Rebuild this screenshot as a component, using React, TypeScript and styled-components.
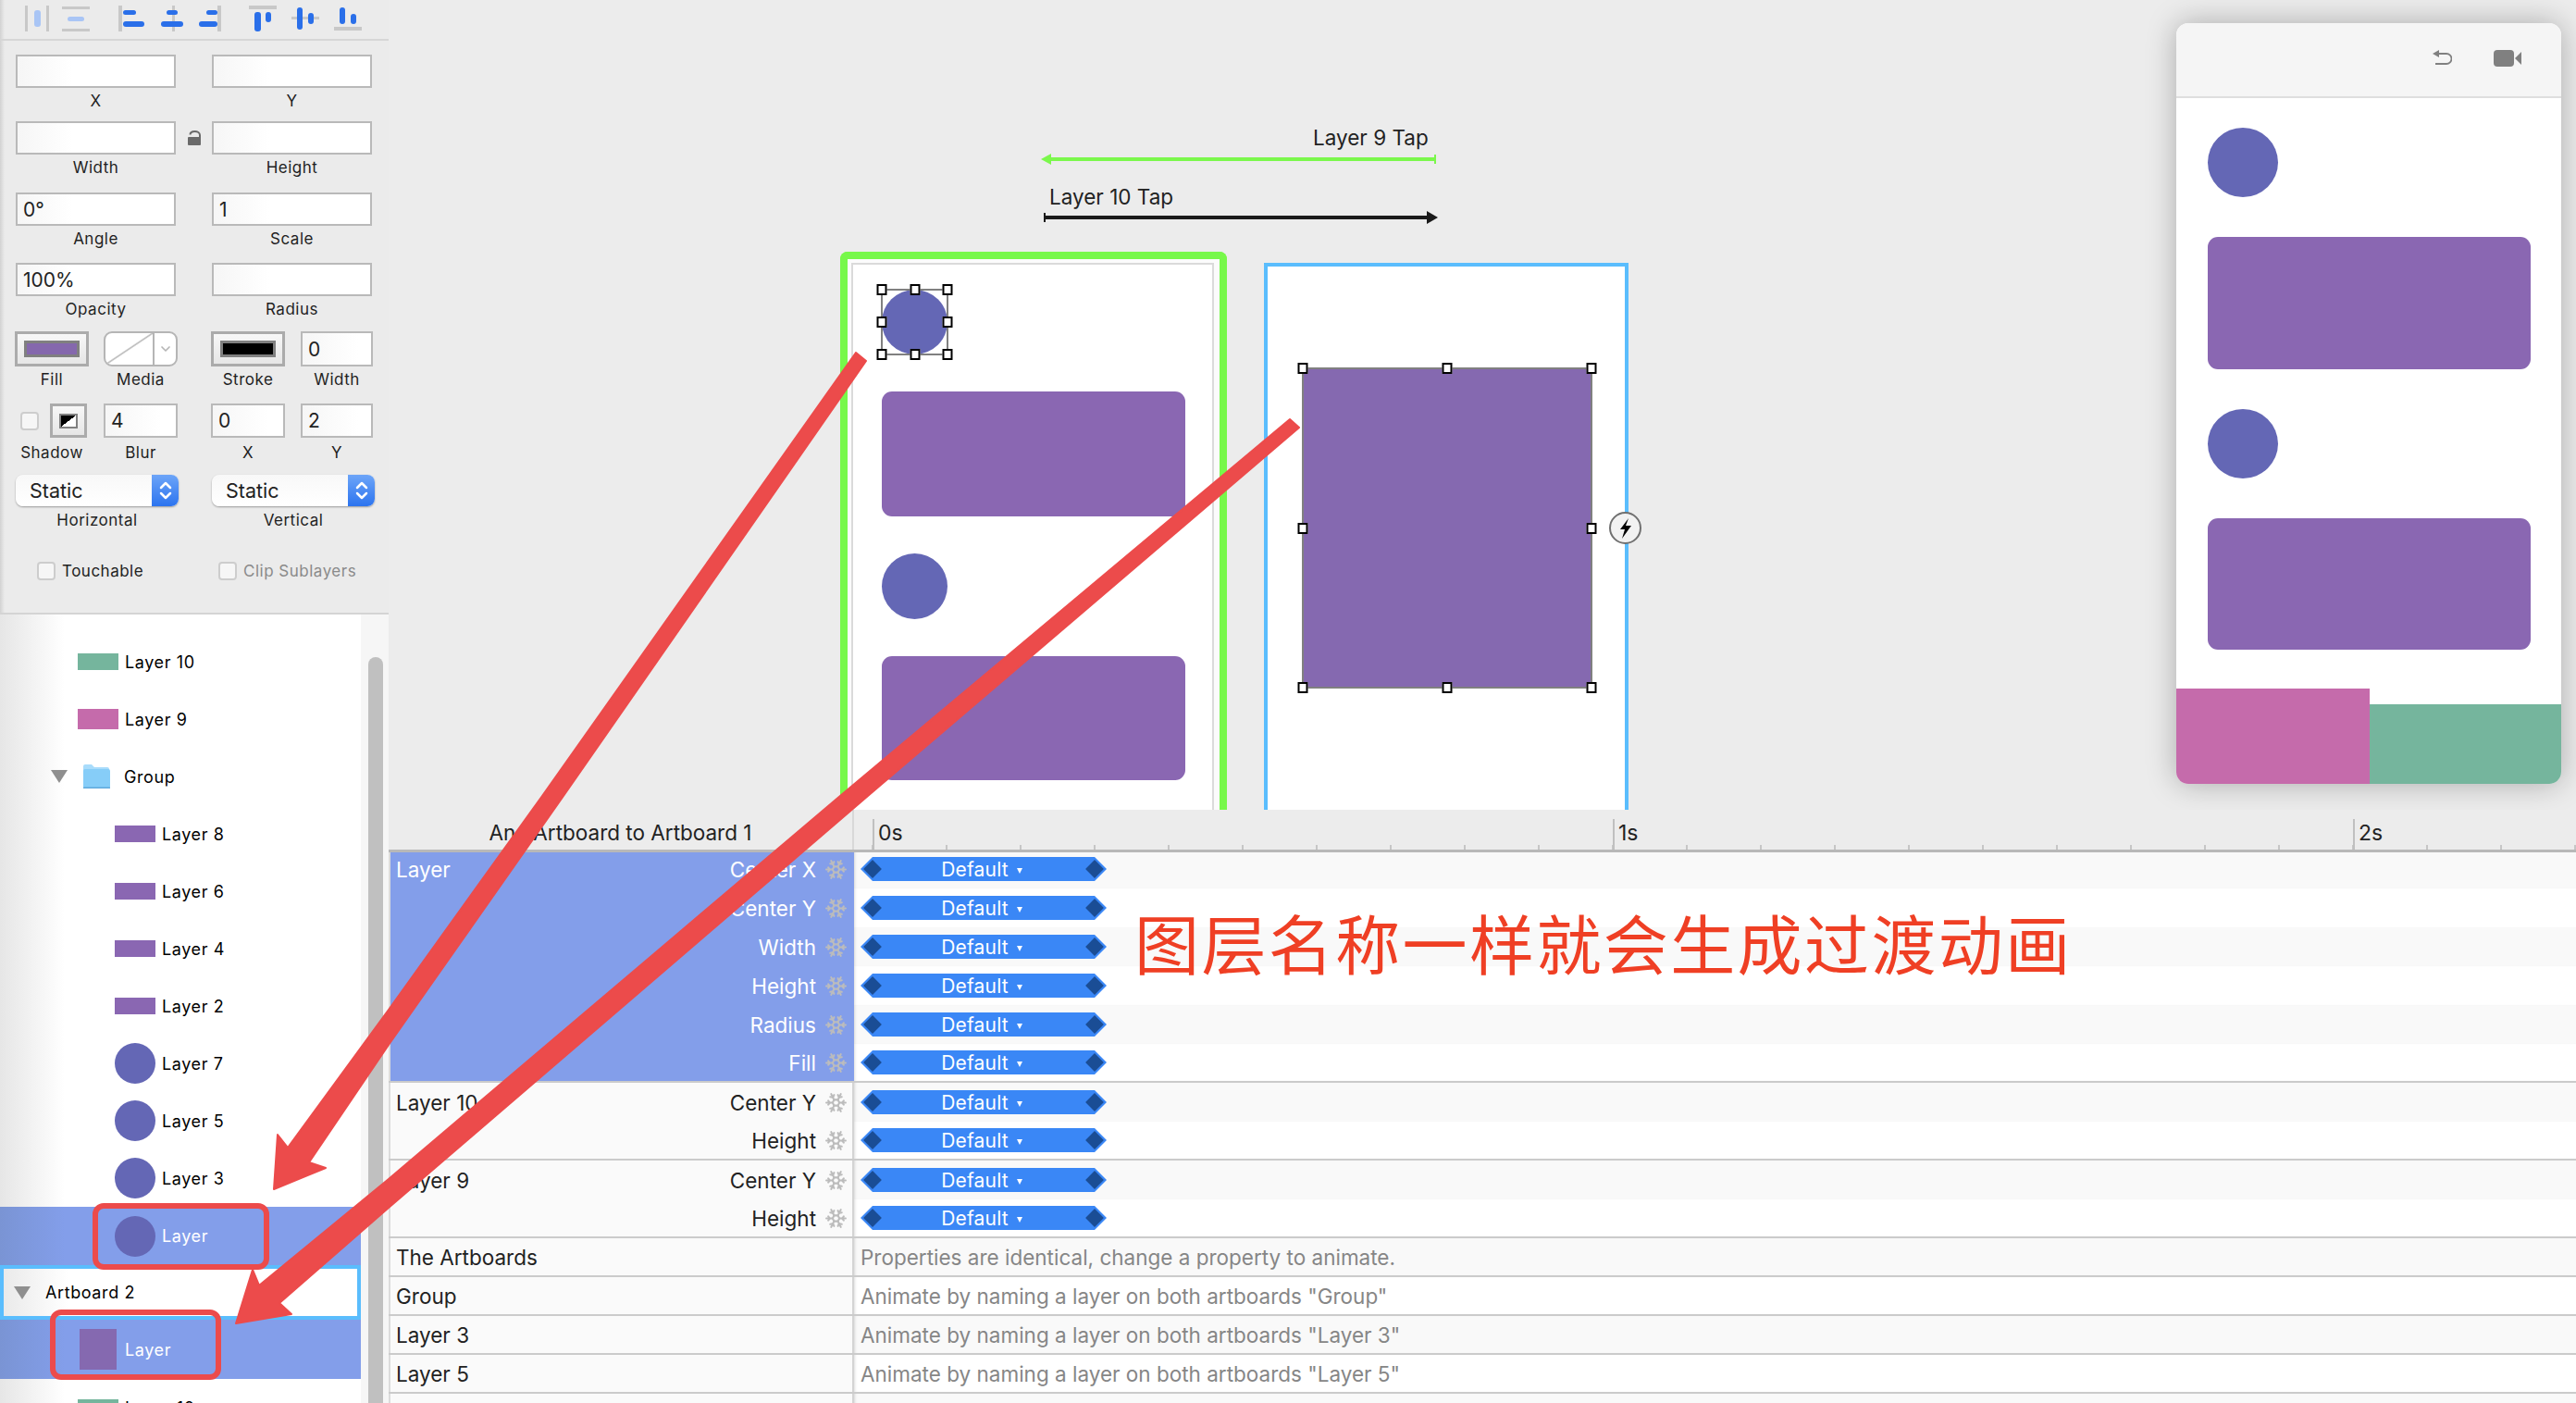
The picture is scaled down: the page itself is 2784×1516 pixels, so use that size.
import React from "react";
import styled, { createGlobalStyle } from "styled-components";
import { ChevronDown, ChevronsUpDown, Snowflake } from "lucide-react";

const PURPLE = "#8a67b2";
const INDIGO = "#6467b5";
const SELECTED = "#839eea";
const RED = "#ec4b4b";

const GlobalStyle = createGlobalStyle`
  html, body { margin: 0; padding: 0; background: #ececec; }
  * { box-sizing: border-box; }
  body { font-family: Inter, "Liberation Sans", sans-serif; }
`;

const Page = styled.div`
  position: relative;
  width: 2784px;
  height: 1516px;
  display: grid;
  grid-template-columns: 420px 1fr;
  overflow: hidden;
`;

/* SIDEBAR */
const Sidebar = styled.aside`
  display: flex;
  flex-direction: column;
  height: 1516px;
  min-width: 0;
`;

const Inspector = styled.section`
  height: 664px;
  flex: none;
  background: linear-gradient(90deg, #d2d2d2 0, #ebebeb 5px);
  border-bottom: 2px solid #d4d4d4;
`;

const Toolbar = styled.div`
  height: 44px;
  display: flex;
  align-items: center;
  padding-bottom: 2px;
  border-bottom: 2px solid #d6d6d6;
  margin-bottom: 15px;
`;

const ToolIcon = styled.svg<{ $ml: number }>`
  flex: none;
  margin-left: ${(p) => p.$ml}px;
`;

const Row = styled.div<{ $mt?: number }>`
  display: grid;
  grid-template-columns: 173px 173px;
  column-gap: 39px;
  padding-left: 17px;
  margin-top: ${(p) => p.$mt ?? 0}px;
`;

const LockRow = styled(Row)`
  grid-template-columns: 173px 39px 173px;
  column-gap: 0;
`;

const WideRow = styled(Row)`
  grid-template-columns: 176px 176px;
  column-gap: 36px;
  padding-left: 16px;
`;

const SelectRow = styled(WideRow)`
  padding-left: 17px;
`;

const Split = styled.div<{ $gap?: number; $last?: number }>`
  display: grid;
  grid-template-columns: 80px ${(p) => p.$last ?? 80}px;
  column-gap: ${(p) => p.$gap ?? 16}px;
`;

const Field = styled.div`
  display: flex;
  flex-direction: column;
  min-width: 0;
`;

const ValueBox = styled.div<{ $h?: number }>`
  height: ${(p) => p.$h ?? 36}px;
  background: linear-gradient(90deg, #f6f6f6 0, #fff 60px);
  border: 2px solid #b9b9b9;
  padding-left: 6px;
  display: flex;
  align-items: center;
  font-size: 21px;
  color: #222;
`;

const Label = styled.div<{ $mt?: number }>`
  margin-top: ${(p) => p.$mt ?? 3}px;
  height: 22px;
  line-height: 22px;
  font-size: 17px;
  letter-spacing: 0.5px;
  text-align: center;
  color: #1f1f1f;
`;

const LockCell = styled.div`
  height: 36px;
  display: flex;
  align-items: center;
  justify-content: center;
`;

const SwatchWell = styled.div<{ $h?: number }>`
  height: ${(p) => p.$h ?? 38}px;
  border: 3px solid #ababab;
  background: linear-gradient(#f7f7f7, #e6e6e6);
  display: flex;
  align-items: center;
  justify-content: center;
`;

const SwatchFill = styled.div<{ $color: string }>`
  width: 60px;
  height: 18px;
  border: 3px solid #808080;
  background: ${(p) => p.$color};
`;

const MediaWell = styled.div`
  height: 38px;
  border: 2px solid #b5b5b5;
  border-radius: 9px;
  background: #fff;
  display: flex;
  overflow: hidden;
`;

const MediaPreview = styled.div`
  flex: 1;
  border-right: 2px solid #b5b5b5;
  background: linear-gradient(to bottom right, transparent calc(50% - 1.5px), #b5b5b5 50%, transparent calc(50% + 1.5px));
`;

const MediaArrow = styled.div`
  width: 23px;
  display: flex;
  align-items: center;
  justify-content: center;
  color: #b5b5b5;
`;

const ShadowControls = styled.div`
  display: flex;
  align-items: center;
  gap: 12px;
  padding-left: 6px;
`;

const ShadowSwatch = styled(SwatchWell)`
  width: 40px;
`;

const ShadowChip = styled.div`
  width: 20px;
  height: 16px;
  border: 2px solid #808080;
  background: linear-gradient(to bottom right, #000 50%, #fff 50%);
`;

const Check = styled.span`
  flex: none;
  width: 20px;
  height: 20px;
  border-radius: 4px;
  border: 2px solid #cdcdcd;
  background: #f6f6f6;
`;

const Select = styled.div`
  height: 34px;
  border-radius: 8px;
  background: linear-gradient(#f8f8f8, #fff);
  box-shadow: 0 1px 2px rgba(0, 0, 0, 0.35);
  display: flex;
  justify-content: space-between;
  align-items: stretch;
  overflow: hidden;
  font-size: 21.5px;
  color: #222;
`;

const SelectText = styled.span`
  padding-left: 15px;
  line-height: 34px;
`;

const SelectArrow = styled.span`
  width: 29px;
  background: linear-gradient(#6da5f8, #2c74ef);
  color: #fff;
  display: flex;
  align-items: center;
  justify-content: center;
`;

const CheckLine = styled.label<{ $off?: boolean; $pl: number }>`
  display: flex;
  align-items: center;
  gap: 7px;
  height: 24px;
  padding-left: ${(p) => p.$pl}px;
  font-size: 17px;
  letter-spacing: 0.5px;
  color: ${(p) => (p.$off ? "#8a8a8a" : "#222")};
`;

/* LAYER LIST */
const ListArea = styled.div`
  flex: 1;
  display: flex;
  min-height: 0;
`;

const LayerList = styled.ul`
  list-style: none;
  margin: 0;
  padding: 20px 0 0;
  width: 390px;
  overflow: hidden;
  background: linear-gradient(90deg, #e6e6e6 0, #fff 70px);
`;

const LayerRow = styled.li<{ $indent: number; $selected?: boolean; $h?: number }>`
  height: ${(p) => p.$h ?? 62}px;
  display: flex;
  align-items: center;
  padding-left: ${(p) => p.$indent}px;
  font-size: 18px;
  letter-spacing: 0.6px;
  color: ${(p) => (p.$selected ? "#fff" : "#000")};
  background: ${(p) => (p.$selected ? `linear-gradient(90deg, #7a94d4 0, ${SELECTED} 70px)` : "transparent")};
`;

const ArtboardRow = styled.li`
  height: 59px;
  display: flex;
  align-items: center;
  padding-left: 11px;
  border: 4px solid #5abdfd;
  background: linear-gradient(90deg, #eaeaea 0, #fff 70px);
  font-size: 18px;
  letter-spacing: 0.6px;
  color: #000;
`;

const Disclosure = styled.span`
  flex: none;
  width: 0;
  height: 0;
  margin-right: 16px;
  border-left: 9px solid transparent;
  border-right: 9px solid transparent;
  border-top: 14px solid #8f8f8f;
`;

const FolderIcon = styled.svg`
  flex: none;
  margin-right: 15px;
`;

const Thumb = styled.span`
  flex: none;
  width: 44px;
  margin-right: 7px;
  display: flex;
  justify-content: center;
`;

const Bar = styled.span<{ $color: string }>`
  width: 44px;
  height: 18px;
  background: ${(p) => p.$color};
`;

const TallBar = styled(Bar)`
  height: 22px;
`;

const BlockThumb = styled.span`
  width: 40px;
  height: 44px;
  background: #8569b0;
`;

const Dot = styled.span`
  width: 44px;
  height: 44px;
  border-radius: 50%;
  background: ${INDIGO};
`;

const Scroller = styled.div`
  flex: 1;
  padding: 46px 6px 0 8px;
  background: #f6f6f6;
`;

const ScrollThumb = styled.div`
  height: 100%;
  border-radius: 8px 8px 0 0;
  background: #c0c0c0;
`;

/* CANVAS */
const Main = styled.main`
  display: flex;
  flex-direction: column;
  min-width: 0;
`;

const Canvas = styled.section`
  position: relative;
  height: 875px;
  flex: none;
  background: #ececec;
  overflow: hidden;
`;

const TapLabel = styled.div<{ $x: number; $y: number }>`
  position: absolute;
  left: ${(p) => p.$x}px;
  top: ${(p) => p.$y}px;
  font-size: 22.5px;
  line-height: 28px;
  color: #222;
`;

const Connectors = styled.svg`
  position: absolute;
  left: 700px;
  top: 160px;
`;

const ArtboardOne = styled.div`
  position: absolute;
  left: 488px;
  top: 272px;
  width: 418px;
  height: 603px;
  padding: 4px 6px 0 4px;
  background: #fbfbfb;
  border: 8px solid #77f84a;
  border-bottom: none;
  border-radius: 8px 8px 0 0;
`;

const BoardScreen = styled.div`
  height: 100%;
  padding: 27px 31px 0;
  background: #fff;
  border: 2px solid #dadada;
  border-bottom: none;
  display: flex;
  flex-direction: column;
  align-items: flex-start;
  gap: 40px;
`;

const Circle = styled.div<{ $w: number; $h: number }>`
  width: ${(p) => p.$w}px;
  height: ${(p) => p.$h}px;
  border-radius: 50%;
  background: ${INDIGO};
  flex: none;
`;

const Card = styled.div<{ $w?: number; $h: number }>`
  width: ${(p) => (p.$w ? `${p.$w}px` : "100%")};
  height: ${(p) => p.$h}px;
  border-radius: 11px;
  background: ${PURPLE};
  flex: none;
`;

const Selection = styled.div<{ $w?: number }>`
  position: relative;
  ${(p) => (p.$w ? `width: ${p.$w}px;` : "")}
  outline: 2px solid #808080;
  outline-offset: -1px;
`;

const Handle = styled.span<{ $x: number; $y: number }>`
  position: absolute;
  left: ${(p) => p.$x}%;
  top: ${(p) => p.$y}%;
  width: 11px;
  height: 12px;
  transform: translate(-50%, -50%);
  background: #fff;
  border: 2px solid #000;
`;

const ArtboardTwo = styled.div`
  position: absolute;
  left: 946px;
  top: 284px;
  width: 394px;
  height: 600px;
  padding: 110px 0 0 38px;
  background: #fff;
  border: 4px solid #5abdfd;
`;

const BigLayer = styled.div`
  width: 312px;
  height: 345px;
  background: #8569b0;
`;

const Bolt = styled.span`
  position: absolute;
  right: -18px;
  top: 265px;
  width: 35px;
  height: 35px;
  border-radius: 50%;
  background: #f2f2f2;
  border: 2px solid #707070;
  display: flex;
  align-items: center;
  justify-content: center;
`;

/* PREVIEW WINDOW */
const Preview = styled.div`
  position: absolute;
  left: 1932px;
  top: 25px;
  width: 416px;
  height: 822px;
  border-radius: 13px;
  background: #fff;
  box-shadow: 0 0 32px rgba(0, 0, 0, 0.28);
  overflow: hidden;
  display: flex;
  flex-direction: column;
`;

const PreviewHead = styled.header`
  height: 81px;
  flex: none;
  display: flex;
  align-items: center;
  justify-content: flex-end;
  gap: 45px;
  padding: 0 43px 4px 0;
  background: #f5f5f5;
  border-bottom: 2px solid #dedede;
`;

const PreviewBody = styled.div`
  padding: 32px 33px 0 34px;
  display: flex;
  flex-direction: column;
  align-items: flex-start;
  gap: 43px;
`;

const PreviewFoot = styled.div`
  margin-top: auto;
  display: flex;
  align-items: flex-end;
`;

const FootTab = styled.div<{ $color: string; $w: number; $h: number }>`
  width: ${(p) => p.$w}px;
  height: ${(p) => p.$h}px;
  background: ${(p) => p.$color};
`;

/* TIMELINE */
const Timeline = styled.section`
  position: relative;
  flex: 1;
  min-height: 0;
  overflow: hidden;
  background: #fafafa;
`;

const TimelineHead = styled.header`
  position: relative;
  z-index: 1;
  height: 43px;
  display: flex;
  background: #ececec;
  box-shadow: 0 3px 0 #b8b8b8;
`;

const HeadTitle = styled.div`
  width: 503px;
  flex: none;
  text-align: center;
  font-size: 22.5px;
  line-height: 50px;
  color: #222;
  border-right: 2px solid #d8d8d8;
  white-space: pre;
`;

const Ruler = styled.div`
  flex: 1;
  display: flex;
  padding-left: 20px;
  background-image: repeating-linear-gradient(90deg, #c6c6c6 0 2px, transparent 2px 80px);
  background-position: 19px 100%;
  background-size: 100% 5px;
  background-repeat: no-repeat;
`;

const Second = styled.div`
  width: 800px;
  flex: none;
  margin-top: 10px;
  border-left: 2px solid #c0c0c0;
  padding-left: 4px;
  font-size: 23px;
  line-height: 30px;
  color: #222;
`;

const TimeRow = styled.div<{ $end?: boolean }>`
  height: 42px;
  display: flex;
  border-bottom: ${(p) => (p.$end ? "2px solid #cbcbcb" : "none")};
`;

const NameCell = styled.div<{ $selected?: boolean }>`
  width: 503px;
  flex: none;
  display: flex;
  align-items: center;
  justify-content: space-between;
  padding: 0 5px 0 6px;
  border-left: 2px solid #dcdcdc;
  border-right: 2px solid ${(p) => (p.$selected ? SELECTED : "#d4d4d4")};
  background: ${(p) => (p.$selected ? SELECTED : "#fafafa")};
  color: ${(p) => (p.$selected ? "#fff" : "#222")};
  font-size: 22.5px;
`;

const PropName = styled.span`
  display: flex;
  align-items: center;
  gap: 9px;
  margin-left: auto;
`;

const Flake = styled(Snowflake)`
  color: #bcbcbc;
`;

const BandCell = styled.div<{ $alt?: boolean }>`
  flex: 1;
  display: flex;
  align-items: center;
  padding-left: 7px;
  background: ${(p) => (p.$alt ? "#fff" : "#f9f9f9")};
  box-shadow: inset 3px 0 3px -2px rgba(0, 0, 0, 0.14);
`;

const KeyBar = styled.div`
  position: relative;
  width: 266px;
  height: 26px;
  background: #3a87f6;
  clip-path: polygon(13px 0, calc(100% - 13px) 0, 100% 50%, calc(100% - 13px) 100%, 13px 100%, 0 50%);
  display: flex;
  align-items: center;
  justify-content: center;
  gap: 9px;
  padding-right: 4px;
  color: #fff;
  font-size: 21px;
  letter-spacing: 0.2px;
`;

const KeyDiamond = styled.span<{ $right?: boolean }>`
  position: absolute;
  top: 6px;
  ${(p) => (p.$right ? "right: 6px;" : "left: 6px;")}
  width: 14px;
  height: 14px;
  background: #1a4d95;
  transform: rotate(45deg);
`;

const Caret = styled.span`
  width: 0;
  height: 0;
  margin-top: 3px;
  border-left: 3.5px solid transparent;
  border-right: 3.5px solid transparent;
  border-top: 6px solid #fff;
`;

const Note = styled.span`
  font-size: 22.5px;
  color: #868686;
`;

const Caption = styled.div`
  position: absolute;
  left: 806px;
  top: 98px;
  z-index: 2;
  font-family: "Noto Sans CJK SC", sans-serif;
  font-size: 70px;
  font-weight: 400;
  line-height: 90px;
  letter-spacing: 2.4px;
  color: #ef3f24;
  white-space: nowrap;
`;

const Overlay = styled.svg`
  position: absolute;
  left: 0;
  top: 0;
  z-index: 3;
  pointer-events: none;
`;

type Rect = [number, number, number, number, number, string];
const GRAY = "#c8c8c8";
const PALE = "#a9c5f5";
const BLUE = "#2a6fe9";
const TOOL_ICONS: { ml: number; rects: Rect[] }[] = [
  { ml: 26, rects: [[1, 1, 3, 28, 0, GRAY], [24, 1, 3, 28, 0, GRAY], [11, 6, 7, 18, 3, PALE]] },
  { ml: 11, rects: [[0, 2, 30, 3, 0, GRAY], [0, 26, 30, 3, 0, GRAY], [6, 13, 18, 5, 2.5, PALE]] },
  { ml: 31, rects: [[0, 1, 4, 28, 0, GRAY], [5, 6, 14, 5, 2.5, BLUE], [5, 18, 23, 6, 3, BLUE]] },
  { ml: 15, rects: [[13, 1, 3, 28, 0, GRAY], [7, 6, 12, 5, 2.5, BLUE], [1, 18, 24, 6, 3, BLUE]] },
  { ml: 9, rects: [[23, 1, 4, 28, 0, GRAY], [11, 6, 12, 5, 2.5, BLUE], [3, 18, 20, 6, 3, BLUE]] },
  { ml: 27, rects: [[0, 1, 30, 4, 0, GRAY], [6, 8, 7, 21, 3, BLUE], [18, 8, 6, 11, 3, BLUE]] },
  { ml: 16, rects: [[0, 13, 30, 3, 0, GRAY], [6, 3, 6, 24, 3, BLUE], [18, 9, 6, 12, 3, BLUE]] },
  { ml: 16, rects: [[0, 24, 30, 4, 0, GRAY], [6, 3, 6, 18, 3, BLUE], [18, 10, 6, 11, 3, BLUE]] },
];

const TAB_LAYERS = [
  { name: "Layer 8", kind: "bar" },
  { name: "Layer 6", kind: "bar" },
  { name: "Layer 4", kind: "bar" },
  { name: "Layer 2", kind: "bar" },
  { name: "Layer 7", kind: "dot" },
  { name: "Layer 5", kind: "dot" },
  { name: "Layer 3", kind: "dot" },
];

const ANIMATED = [
  { name: "Layer", selected: true, props: ["Center X", "Center Y", "Width", "Height", "Radius", "Fill"] },
  { name: "Layer 10", selected: false, props: ["Center Y", "Height"] },
  { name: "Layer 9", selected: false, props: ["Center Y", "Height"] },
];

const NOTES = [
  ["The Artboards", "Properties are identical, change a property to animate."],
  ["Group", 'Animate by naming a layer on both artboards "Group"'],
  ["Layer 3", 'Animate by naming a layer on both artboards "Layer 3"'],
  ["Layer 5", 'Animate by naming a layer on both artboards "Layer 5"'],
  ["", ""],
];

const HANDLES_8 = [
  [0, 0], [50, 0], [100, 0],
  [0, 50], [100, 50],
  [0, 100], [50, 100], [100, 100],
];

function Handles() {
  return (
    <>
      {HANDLES_8.map(([x, y]) => (
        <Handle key={`${x}-${y}`} $x={x} $y={y} />
      ))}
    </>
  );
}

function Folder() {
  return (
    <FolderIcon width="30" height="28" viewBox="0 0 30 28">
      <path d="M1 3a2 2 0 0 1 2-2h7l3 3h14a2 2 0 0 1 2 2v3H1z" fill="#a9dcfb" />
      <rect x="1" y="6" width="29" height="21" rx="2" fill="#86cdf8" />
      <rect x="1" y="25.5" width="29" height="1.5" fill="#5fa9dc" />
    </FolderIcon>
  );
}

function KeyframeBar() {
  return (
    <KeyBar>
      <KeyDiamond />
      Default
      <Caret />
      <KeyDiamond $right />
    </KeyBar>
  );
}

export default function App() {
  let band = 0;
  return (
    <Page>
      <GlobalStyle />
      <Sidebar>
        <Inspector>
          <Toolbar>
            {TOOL_ICONS.map((icon, i) => (
              <ToolIcon key={i} $ml={icon.ml} width="30" height="30" viewBox="0 0 30 30">
                {icon.rects.map(([x, y, w, h, r, fill], j) => (
                  <rect key={j} x={x} y={y} width={w} height={h} rx={r} fill={fill} />
                ))}
              </ToolIcon>
            ))}
          </Toolbar>

          <Row>
            <Field><ValueBox /><Label>X</Label></Field>
            <Field><ValueBox /><Label>Y</Label></Field>
          </Row>
          <LockRow $mt={11}>
            <Field><ValueBox /><Label>Width</Label></Field>
            <LockCell>
              <svg width="14" height="16" viewBox="0 0 14 16">
                <path d="M2.5 4.5C2.5 2 4.5 1 7.5 1S13 2.5 13 5v3" fill="none" stroke="#6a6a6a" strokeWidth="2" />
                <rect x="0" y="7" width="14" height="9" rx="1" fill="#6a6a6a" />
              </svg>
            </LockCell>
            <Field><ValueBox /><Label>Height</Label></Field>
          </LockRow>
          <Row $mt={16}>
            <Field><ValueBox>0°</ValueBox><Label>Angle</Label></Field>
            <Field><ValueBox>1</ValueBox><Label>Scale</Label></Field>
          </Row>
          <Row $mt={15}>
            <Field><ValueBox>100%</ValueBox><Label>Opacity</Label></Field>
            <Field><ValueBox /><Label>Radius</Label></Field>
          </Row>
          <WideRow $mt={13}>
            <Split>
              <Field>
                <SwatchWell><SwatchFill $color="#8568ad" /></SwatchWell>
                <Label>Fill</Label>
              </Field>
              <Field>
                <MediaWell>
                  <MediaPreview />
                  <MediaArrow><ChevronDown size={16} strokeWidth={2.5} /></MediaArrow>
                </MediaWell>
                <Label>Media</Label>
              </Field>
            </Split>
            <Split $gap={17} $last={78}>
              <Field>
                <SwatchWell><SwatchFill $color="#000" /></SwatchWell>
                <Label>Stroke</Label>
              </Field>
              <Field>
                <ValueBox $h={38}>0</ValueBox>
                <Label>Width</Label>
              </Field>
            </Split>
          </WideRow>
          <WideRow $mt={15}>
            <Split>
              <Field>
                <ShadowControls>
                  <Check />
                  <ShadowSwatch $h={37}><ShadowChip /></ShadowSwatch>
                </ShadowControls>
                <Label $mt={5}>Shadow</Label>
              </Field>
              <Field>
                <ValueBox $h={37}>4</ValueBox>
                <Label $mt={5}>Blur</Label>
              </Field>
            </Split>
            <Split $gap={17} $last={78}>
              <Field>
                <ValueBox $h={37}>0</ValueBox>
                <Label $mt={5}>X</Label>
              </Field>
              <Field>
                <ValueBox $h={37}>2</ValueBox>
                <Label $mt={5}>Y</Label>
              </Field>
            </Split>
          </WideRow>
          <SelectRow $mt={13}>
            <Field>
              <Select>
                <SelectText>Static</SelectText>
                <SelectArrow><ChevronsUpDown size={24} strokeWidth={2.5} /></SelectArrow>
              </Select>
              <Label $mt={4}>Horizontal</Label>
            </Field>
            <Field>
              <Select>
                <SelectText>Static</SelectText>
                <SelectArrow><ChevronsUpDown size={24} strokeWidth={2.5} /></SelectArrow>
              </Select>
              <Label $mt={4}>Vertical</Label>
            </Field>
          </SelectRow>
          <Row $mt={32}>
            <CheckLine $pl={23}><Check />Touchable</CheckLine>
            <CheckLine $pl={7} $off><Check />Clip Sublayers</CheckLine>
          </Row>
        </Inspector>

        <ListArea>
          <LayerList>
            <LayerRow $indent={84}>
              <Thumb><Bar $color="#75b59d" /></Thumb>Layer 10
            </LayerRow>
            <LayerRow $indent={84}>
              <Thumb><TallBar $color="#c56bab" /></Thumb>Layer 9
            </LayerRow>
            <LayerRow $indent={55}>
              <Disclosure />
              <Folder />
              Group
            </LayerRow>
            {TAB_LAYERS.map((layer) => (
              <LayerRow key={layer.name} $indent={124}>
                <Thumb>{layer.kind === "bar" ? <Bar $color={PURPLE} /> : <Dot />}</Thumb>
                {layer.name}
              </LayerRow>
            ))}
            <LayerRow $indent={124} $selected $h={63}>
              <Thumb><Dot /></Thumb>Layer
            </LayerRow>
            <ArtboardRow>
              <Disclosure />Artboard 2
            </ArtboardRow>
            <LayerRow $indent={84} $selected $h={64}>
              <Thumb><BlockThumb /></Thumb>Layer
            </LayerRow>
            <LayerRow $indent={84}>
              <Thumb><Bar $color="#75b59d" /></Thumb>Layer 10
            </LayerRow>
          </LayerList>
          <Scroller><ScrollThumb /></Scroller>
        </ListArea>
      </Sidebar>

      <Main>
        <Canvas>
          <TapLabel $x={999} $y={135}>Layer 9 Tap</TapLabel>
          <TapLabel $x={714} $y={199}>Layer 10 Tap</TapLabel>
          <Connectors width="440" height="90" viewBox="0 0 440 90">
            <path d="M15 12H431" stroke="#7bf84c" strokeWidth="4" />
            <path d="M5 12l11-6v12z" fill="#7bf84c" />
            <path d="M431 7v10" stroke="#7bf84c" strokeWidth="2" />
            <path d="M10 75H424" stroke="#1a1a1a" strokeWidth="4" />
            <path d="M434 75l-12-7v14z" fill="#1a1a1a" />
            <path d="M9 70v10" stroke="#1a1a1a" strokeWidth="2" />
          </Connectors>

          <ArtboardOne>
            <BoardScreen>
              <Selection>
                <Circle $w={71} $h={70} />
                <Handles />
              </Selection>
              <Card $w={328} $h={135} />
              <Circle $w={71} $h={71} />
              <Card $w={328} $h={134} />
            </BoardScreen>
          </ArtboardOne>

          <ArtboardTwo>
            <Selection $w={312}>
              <BigLayer />
              <Handles />
            </Selection>
            <Bolt>
              <svg width="16" height="24" viewBox="0 0 16 24">
                <path d="M11 1L2 13h5l-3 10 10-14H8z" fill="#000" />
              </svg>
            </Bolt>
          </ArtboardTwo>

          <Preview>
            <PreviewHead>
              <svg width="22" height="20" viewBox="0 0 22 20">
                <path d="M1 5l7-4v8z" fill="#808080" />
                <path d="M7 5h9a5.5 5.5 0 0 1 0 11H4" fill="none" stroke="#808080" strokeWidth="1.8" />
              </svg>
              <svg width="30" height="18" viewBox="0 0 30 18">
                <rect x="0" y="0" width="22" height="18" rx="4" fill="#808080" />
                <path d="M23 9l7-7v14z" fill="#808080" />
              </svg>
            </PreviewHead>
            <PreviewBody>
              <Circle $w={76} $h={75} />
              <Card $h={143} />
              <Circle $w={76} $h={75} />
              <Card $h={142} />
            </PreviewBody>
            <PreviewFoot>
              <FootTab $color="#c56bab" $w={209} $h={103} />
              <FootTab $color="#75b59d" $w={207} $h={86} />
            </PreviewFoot>
          </Preview>
        </Canvas>

        <Timeline>
          <TimelineHead>
            <HeadTitle>{"An\u00a0\u00a0\u00a0Artboard to Artboard 1"}</HeadTitle>
            <Ruler>
              <Second>0s</Second>
              <Second>1s</Second>
              <Second>2s</Second>
            </Ruler>
          </TimelineHead>

          {ANIMATED.map((group) =>
            group.props.map((prop, i) => {
              const alt = band++ % 2 === 1;
              return (
                <TimeRow key={group.name + prop} $end={i === group.props.length - 1}>
                  <NameCell $selected={group.selected}>
                    {i === 0 && <span>{group.name}</span>}
                    <PropName>
                      {prop}
                      <Flake size={25} strokeWidth={2} />
                    </PropName>
                  </NameCell>
                  <BandCell $alt={alt}>
                    <KeyframeBar />
                  </BandCell>
                </TimeRow>
              );
            })
          )}

          {NOTES.map(([name, note]) => {
            const alt = band++ % 2 === 1;
            return (
              <TimeRow key={name} $end>
                <NameCell>{name}</NameCell>
                <BandCell $alt={alt}>
                  <Note>{note}</Note>
                </BandCell>
              </TimeRow>
            );
          })}

          <Caption>图层名称一样就会生成过渡动画</Caption>
        </Timeline>
      </Main>

      <Overlay width="2784" height="1516" viewBox="0 0 2784 1516">
        <path
          d="M925 381L586 860L420 1091L311 1240L300 1226L296 1285L352 1262L334 1256L420 1129L609 860L936 390Z"
          fill={RED}
          stroke={RED}
          strokeWidth="2"
          strokeLinejoin="round"
        />
        <path
          d="M1394 453L908 860L420 1274L280 1389L273 1372L255 1430L315 1420L302 1408L420 1305L938 860L1404 462Z"
          fill={RED}
          stroke={RED}
          strokeWidth="2"
          strokeLinejoin="round"
        />
        <rect x="103" y="1303" width="185" height="66" rx="9" fill="none" stroke={RED} strokeWidth="6" />
        <rect x="57" y="1418" width="179" height="70" rx="9" fill="none" stroke={RED} strokeWidth="6" />
      </Overlay>
    </Page>
  );
}
